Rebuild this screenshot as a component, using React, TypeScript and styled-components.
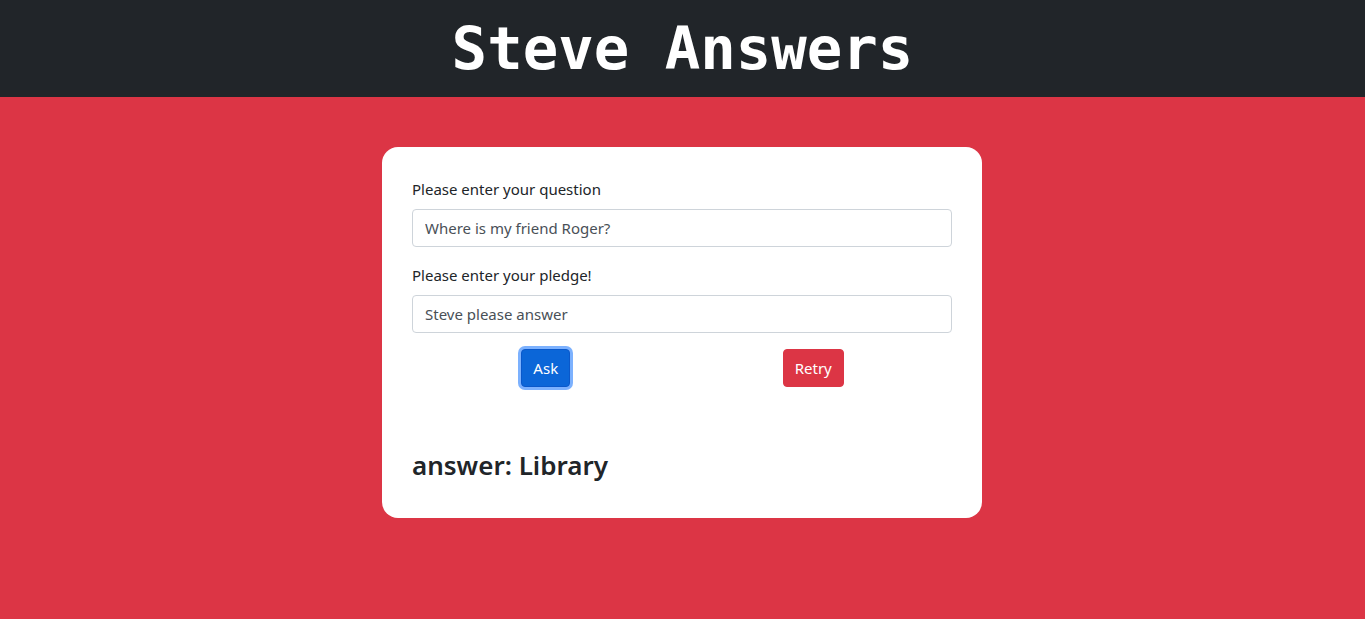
import React from "react";
import styled, { createGlobalStyle } from "styled-components";

const Global = createGlobalStyle`
  html, body { margin: 0; padding: 0; }
  body {
    background: #dc3545;
    font-family: "Segoe UI", "Noto Sans", "Open Sans", sans-serif;
    color: #212529;
    min-height: 619px;
  }
  * { box-sizing: border-box; }
`;

const Header = styled.header`
  background: #212529;
  height: 97px;
  display: flex;
  align-items: center;
  justify-content: center;
`;

const Title = styled.h1`
  margin: 0;
  color: #fff;
  font-family: "DejaVu Sans Mono", "Liberation Mono", monospace;
  font-weight: bold;
  font-size: 59px;
  line-height: 1;
`;

const Main = styled.main`
  display: flex;
  justify-content: center;
  padding-top: 50px;
  padding-right: 1px;
`;

const Card = styled.section`
  width: 600px;
  background: #fff;
  border-radius: 16px;
  padding: 30px;
`;

const Field = styled.div`
  margin-bottom: 16px;
`;

const Label = styled.label`
  display: block;
  font-size: 15px;
  line-height: 24px;
  margin-bottom: 8px;
`;

const Input = styled.input`
  display: block;
  width: 100%;
  height: 38px;
  padding: 6px 12px;
  font-size: 15px;
  font-family: inherit;
  color: #495057;
  border: 1px solid #ced4da;
  border-radius: 4px;
  outline: none;
`;

const ButtonRow = styled.div`
  display: grid;
  grid-template-columns: 1fr 1fr;
  justify-items: center;
  padding-right: 5px;
`;

const Button = styled.button<{ $variant: "primary" | "danger"; $focused?: boolean }>`
  height: 38px;
  padding: 0 11px;
  font-family: inherit;
  font-size: 15px;
  color: #fff;
  border-radius: 4px;
  border: 1px solid ${(p) => (p.$variant === "primary" ? "#0a58ca" : "#dc3545")};
  background: ${(p) => (p.$variant === "primary" ? "#0b66d8" : "#dc3545")};
  box-shadow: ${(p) => (p.$focused ? "0 0 0 3px rgba(110, 168, 254, 0.9)" : "none")};
  cursor: pointer;
`;

const Answer = styled.h3`
  margin: 61px 0 6px;
  font-size: 26px;
  font-weight: 600;
  line-height: 34px;
`;

export default function App() {
  return (
    <>
      <Global />
      <Header>
        <Title>Steve Answers</Title>
      </Header>
      <Main>
        <Card>
          <Field>
            <Label>Please enter your question</Label>
            <Input defaultValue="Where is my friend Roger?" />
          </Field>
          <Field>
            <Label>Please enter your pledge!</Label>
            <Input defaultValue="Steve please answer" />
          </Field>
          <ButtonRow>
            <Button $variant="primary" $focused>Ask</Button>
            <Button $variant="danger">Retry</Button>
          </ButtonRow>
          <Answer>answer: Library</Answer>
        </Card>
      </Main>
    </>
  );
}
